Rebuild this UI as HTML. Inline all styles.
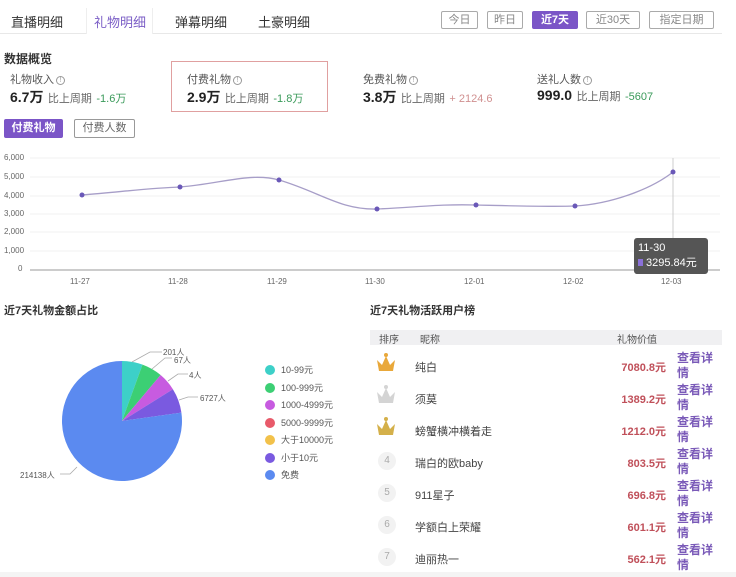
<!DOCTYPE html>
<html><head><meta charset="utf-8"><style>
*{margin:0;padding:0;box-sizing:border-box}
body{width:736px;height:577px;background:#fff;font-family:"Liberation Sans","Noto Sans CJK SC",sans-serif;position:relative;overflow:hidden;color:#333}
.a{position:absolute;white-space:nowrap}
.btn{position:absolute;top:11px;height:18px;border:1px solid #aaa;border-radius:2px;font-size:11px;color:#888;text-align:center;line-height:16px}
.cn{font-size:11px;color:#555}
.big{font-size:14px;font-weight:bold;color:#222}
.cmp{font-size:11px;color:#666}
.q{display:inline-block;width:9px;height:9px;border:1px solid #999;border-radius:50%;font-size:7px;line-height:7px;text-align:center;color:#999;vertical-align:1px;margin-left:2px}
.yl{position:absolute;left:4px;font-size:8px;color:#666}
.xl{position:absolute;top:277px;font-size:8px;color:#666}
.leg{position:absolute;left:265px;font-size:9px;color:#555}
.leg i{display:inline-block;width:10px;height:10px;border-radius:50%;vertical-align:-2px;margin-right:6px}
.row{position:absolute;left:370px;width:352px;height:32px}
.nm{position:absolute;left:45px;top:9px;font-size:11px;color:#444}
.val{position:absolute;left:226px;width:70px;text-align:right;top:9px;font-size:11px;color:#c0505a;font-weight:bold}
.lk{position:absolute;left:307px;top:1px;width:40px;font-size:12px;line-height:15px;color:#7a5ab8;font-weight:bold;white-space:normal}
.num{position:absolute;left:8px;top:6px;width:18px;height:18px;border-radius:50%;background:#f2f2f2;color:#aaa;font-size:10px;text-align:center;line-height:18px}
</style></head><body>
<div class="a" style="left:0;top:33px;width:722px;height:1px;background:#e8e8e8"></div>
<div class="a" style="left:86px;top:8px;width:67px;height:26px;background:#fff;border-left:1px solid #eee;border-right:1px solid #eee"></div>
<div class="a" style="left:11px;top:12px;font-size:13px;color:#333">直播明细</div>
<div class="a" style="left:94px;top:12px;font-size:13px;color:#7b5ec6">礼物明细</div>
<div class="a" style="left:175px;top:12px;font-size:13px;color:#333">弹幕明细</div>
<div class="a" style="left:258px;top:12px;font-size:13px;color:#333">土豪明细</div>
<div class="btn" style="left:441px;width:37px">今日</div>
<div class="btn" style="left:487px;width:36px">昨日</div>
<div class="btn" style="left:532px;width:46px;background:#7b55c7;border-color:#7b55c7;color:#fff;font-weight:bold">近7天</div>
<div class="btn" style="left:586px;width:54px">近30天</div>
<div class="btn" style="left:649px;width:65px">指定日期</div>

<div class="a" style="left:4px;top:50px;font-size:12px;font-weight:bold;color:#333">数据概览</div>
<div class="a" style="left:171px;top:61px;width:157px;height:51px;border:1px solid #e0a0a0"></div>
<div class="a cn" style="left:10px;top:71px">礼物收入<span class="q">!</span></div>
<div class="a" style="left:10px;top:87px"><span class="big">6.7万</span> <span class="cmp">比上周期</span> <span style="font-size:11px;color:#3a9a5a">-1.6万</span></div>
<div class="a cn" style="left:187px;top:71px">付费礼物<span class="q">!</span></div>
<div class="a" style="left:187px;top:87px"><span class="big">2.9万</span> <span class="cmp">比上周期</span> <span style="font-size:11px;color:#3a9a5a">-1.8万</span></div>
<div class="a cn" style="left:363px;top:71px">免费礼物<span class="q">!</span></div>
<div class="a" style="left:363px;top:87px"><span class="big">3.8万</span> <span class="cmp">比上周期</span> <span style="font-size:11px;color:#d09090">+ 2124.6</span></div>
<div class="a cn" style="left:537px;top:71px">送礼人数<span class="q">!</span></div>
<div class="a" style="left:537px;top:87px"><span class="big">999.0</span> <span class="cmp">比上周期</span> <span style="font-size:11px;color:#3a9a5a">-5607</span></div>

<div class="a" style="left:4px;top:119px;width:59px;height:19px;background:#7b55c7;color:#fff;font-size:11px;font-weight:bold;text-align:center;line-height:19px;border-radius:2px">付费礼物</div>
<div class="a" style="left:74px;top:119px;width:61px;height:19px;border:1px solid #999;color:#666;font-size:11px;text-align:center;line-height:17px;border-radius:2px">付费人数</div>

<div class="yl" style="top:153px">6,000</div>
<div class="yl" style="top:172px">5,000</div>
<div class="yl" style="top:191px">4,000</div>
<div class="yl" style="top:209px">3,000</div>
<div class="yl" style="top:227px">2,000</div>
<div class="yl" style="top:246px">1,000</div>
<div class="yl" style="top:264px;left:18px">0</div>
<svg class="a" style="left:0;top:0" width="736" height="300">
<g stroke="#f0f0f0" stroke-width="1">
<line x1="30" y1="158" x2="720" y2="158"/><line x1="30" y1="177" x2="720" y2="177"/><line x1="30" y1="196" x2="720" y2="196"/><line x1="30" y1="214" x2="720" y2="214"/><line x1="30" y1="232" x2="720" y2="232"/><line x1="30" y1="251" x2="720" y2="251"/>
</g>
<line x1="30" y1="270" x2="720" y2="270" stroke="#999"/>
<line x1="673" y1="158" x2="673" y2="240" stroke="#ccc"/>
<path d="M82,195 C120,192 150,188 180,187 C220,184 250,172 279,180 C320,192 340,210 377,209 C420,207 440,204 476,205 C520,206 550,207 575,206 C610,204 650,190 673,172" fill="none" stroke="#a79ec8" stroke-width="1.3"/>
<g fill="#6a58b8"><circle cx="82" cy="195" r="2.5"/><circle cx="180" cy="187" r="2.5"/><circle cx="279" cy="180" r="2.5"/><circle cx="377" cy="209" r="2.5"/><circle cx="476" cy="205" r="2.5"/><circle cx="575" cy="206" r="2.5"/><circle cx="673" cy="172" r="2.5"/></g>
</svg>
<div class="xl" style="left:70px">11-27</div>
<div class="xl" style="left:168px">11-28</div>
<div class="xl" style="left:267px">11-29</div>
<div class="xl" style="left:365px">11-30</div>
<div class="xl" style="left:464px">12-01</div>
<div class="xl" style="left:563px">12-02</div>
<div class="xl" style="left:661px">12-03</div>
<div class="a" style="left:634px;top:238px;width:74px;height:36px;background:#555;border-radius:3px;color:#fff;font-size:11px;padding:3px 4px;line-height:15px">11-30<br><span style="display:inline-block;width:5px;height:7px;background:#8a70d8;margin-right:3px"></span>3295.84元</div>

<div class="a" style="left:4px;top:302px;font-size:11px;font-weight:bold;color:#333">近7天礼物金额占比</div>
<svg class="a" style="left:0;top:0" width="360" height="577">
<path d="M122,421 L122,361 A60,60 0 0,1 142.5,364.6Z" fill="#3dd0c8"/>
<path d="M122,421 L142.5,364.6 A60,60 0 0,1 160.6,375Z" fill="#3ccf74"/>
<path d="M122,421 L160.6,375 A60,60 0 0,1 172.9,389.2Z" fill="#c75be0"/>
<path d="M122,421 L172.9,389.2 A60,60 0 0,1 181.4,412.6Z" fill="#7a5ae0"/>
<path d="M122,421 L181.4,412.6 A60,60 0 1,1 122,361Z" fill="#5b8af0"/>
<g fill="none" stroke="#aaa" stroke-width="0.8">
<path d="M132,362 L150,352 L162,352"/><path d="M152,369 L165,358 L172,358"/><path d="M168,381 L178,374 L188,374"/><path d="M179,400 L188,397 L198,397"/><path d="M77,467 L70,474 L60,474"/>
</g>
</svg>
<div class="a" style="left:163px;top:347px;font-size:8px;color:#555">201人</div>
<div class="a" style="left:174px;top:355px;font-size:8px;color:#555">67人</div>
<div class="a" style="left:189px;top:370px;font-size:8px;color:#555">4人</div>
<div class="a" style="left:200px;top:393px;font-size:8px;color:#555">6727人</div>
<div class="a" style="left:20px;top:470px;font-size:8px;color:#555">214138人</div>
<div class="leg" style="top:363px"><i style="background:#3dd0c8"></i>10-99元</div>
<div class="leg" style="top:381px"><i style="background:#3ccf74"></i>100-999元</div>
<div class="leg" style="top:398px"><i style="background:#c75be0"></i>1000-4999元</div>
<div class="leg" style="top:416px"><i style="background:#e85a6a"></i>5000-9999元</div>
<div class="leg" style="top:433px"><i style="background:#f2c14a"></i>大于10000元</div>
<div class="leg" style="top:451px"><i style="background:#7a5ae0"></i>小于10元</div>
<div class="leg" style="top:468px"><i style="background:#5b8af0"></i>免费</div>

<div class="a" style="left:370px;top:302px;font-size:11px;font-weight:bold;color:#333">近7天礼物活跃用户榜</div>
<div class="a" style="left:370px;top:330px;width:352px;height:15px;background:#f0f0f2"></div>
<div class="a" style="left:379px;top:331px;font-size:10px;color:#555">排序</div>
<div class="a" style="left:420px;top:331px;font-size:10px;color:#555">昵称</div>
<div class="a" style="left:617px;top:331px;font-size:10px;color:#555">礼物价值</div>

<svg class="a" style="left:375px;top:352px" width="22" height="20"><path d="M2,8 L7,13 L11,4 L15,13 L20,8 L18,19 L4,19Z" fill="#e9a83a"/><circle cx="11" cy="3" r="2" fill="#e9a83a"/></svg>
<svg class="a" style="left:375px;top:384px" width="22" height="20"><path d="M2,8 L7,13 L11,4 L15,13 L20,8 L18,19 L4,19Z" fill="#d4d4d4"/><circle cx="11" cy="3" r="2" fill="#d4d4d4"/></svg>
<svg class="a" style="left:375px;top:416px" width="22" height="20"><path d="M2,8 L7,13 L11,4 L15,13 L20,8 L18,19 L4,19Z" fill="#d4b04a"/><circle cx="11" cy="3" r="2" fill="#d4b04a"/></svg>
<div class="row" style="top:350px"><div class="nm">纯白</div><div class="val">7080.8元</div><div class="lk">查看详情</div></div>
<div class="row" style="top:382px"><div class="nm">须莫</div><div class="val">1389.2元</div><div class="lk">查看详情</div></div>
<div class="row" style="top:414px"><div class="nm">螃蟹横冲横着走</div><div class="val">1212.0元</div><div class="lk">查看详情</div></div>
<div class="row" style="top:446px"><div class="num">4</div><div class="nm">瑞白的欧baby</div><div class="val">803.5元</div><div class="lk">查看详情</div></div>
<div class="row" style="top:478px"><div class="num">5</div><div class="nm">911星子</div><div class="val">696.8元</div><div class="lk">查看详情</div></div>
<div class="row" style="top:510px"><div class="num">6</div><div class="nm">学额白上荣耀</div><div class="val">601.1元</div><div class="lk">查看详情</div></div>
<div class="row" style="top:542px"><div class="num">7</div><div class="nm">迪丽热一</div><div class="val">562.1元</div><div class="lk">查看详情</div></div>
<div class="a" style="left:0;top:572px;width:736px;height:5px;background:#f4f4f4"></div>
</body></html>
